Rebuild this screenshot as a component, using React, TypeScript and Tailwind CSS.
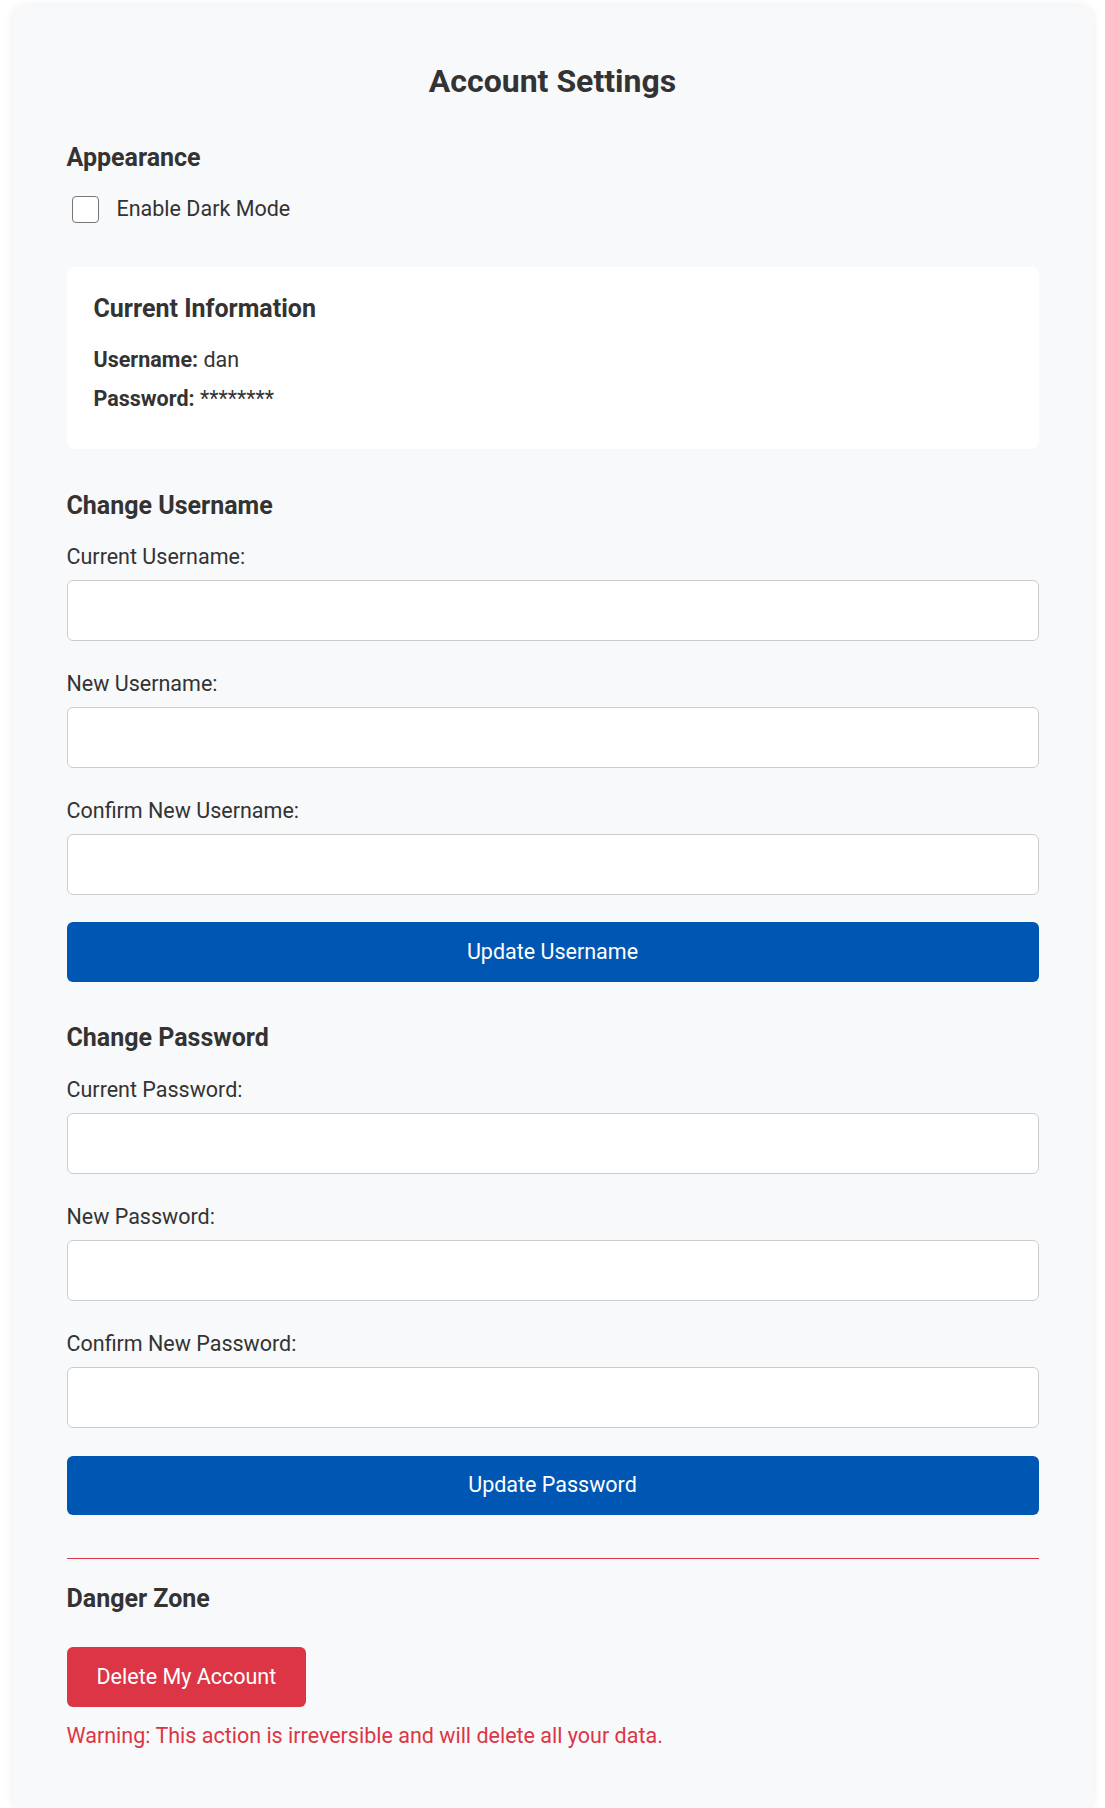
import React from "react";

function Field({ label, type = "text", mb = "mb-[28px]" }: { label: string; type?: string; mb?: string }) {
  return (
    <div className={mb}>
      <label className="block text-[21.5px] leading-[32px] text-[#333] mb-[7px]">{label}</label>
      <input
        type={type}
        className="block w-full h-[61px] bg-white border border-[#cccccc] rounded-[6px] px-3 text-[20px] outline-none"
      />
    </div>
  );
}

export default function App() {
  return (
    <div className="min-h-screen bg-white pt-[6px]" style={{ fontFamily: "Roboto, 'Noto Sans', sans-serif" }}>
      <div className="mx-auto w-[1080px] bg-[#f8f9fa] rounded-[12px] shadow-[0_0_10px_rgba(0,0,0,0.08)] px-[54px] pt-[56px] pb-[60px] text-[#333]">
        <h1 className="text-[32px] leading-[38px] font-bold text-center text-[#333]">Account Settings</h1>

        <h2 className="mt-[43px] text-[25px] leading-[30px] font-bold text-[#333]">Appearance</h2>
        <div className="mt-[20px] flex items-center h-[32px]">
          <div className="ml-[5px] w-[27px] h-[27px] rounded-[4px] border-[1.5px] border-[#767676] bg-white" />
          <span className="ml-[18px] text-[21.5px] leading-[32px] text-[#333]">Enable Dark Mode</span>
        </div>

        <div className="mt-[42px] bg-white rounded-[8px] px-[27px] pt-[27px] pb-[34px]">
          <h3 className="text-[25px] leading-[30px] font-bold text-[#333]">Current Information</h3>
          <p className="mt-[20px] text-[21.5px] leading-[32px]">
            <span className="font-bold">Username:</span> dan
          </p>
          <p className="mt-[7px] text-[21.5px] leading-[32px]">
            <span className="font-bold">Password:</span> ********
          </p>
        </div>

        <h2 className="mt-[42px] text-[25px] leading-[30px] font-bold text-[#333]">Change Username</h2>
        <div className="mt-[20px]">
          <Field label="Current Username:" mb="mb-[27px]" />
          <Field label="New Username:" mb="mb-[27px]" />
          <Field label="Confirm New Username:" mb="mb-[27px]" />
          <button className="block w-full h-[60px] bg-[#0056b3] text-white rounded-[6px] text-[21.5px]">
            Update Username
          </button>
        </div>

        <h2 className="mt-[41px] text-[25px] leading-[30px] font-bold text-[#333]">Change Password</h2>
        <div className="mt-[21px]">
          <Field label="Current Password:" type="password" mb="mb-[27px]" />
          <Field label="New Password:" type="password" mb="mb-[27px]" />
          <Field label="Confirm New Password:" type="password" mb="mb-[28px]" />
          <button className="block w-full h-[59px] bg-[#0056b3] text-white rounded-[6px] text-[21.5px]">
            Update Password
          </button>
        </div>

        <div className="mt-[43px] border-t border-[#dc3545]" />
        <h2 className="mt-[25px] text-[25px] leading-[30px] font-bold text-[#333]">Danger Zone</h2>
        <button className="mt-[33px] block h-[60px] px-[30px] bg-[#dc3545] text-white rounded-[6px] text-[21.5px]">
          Delete My Account
        </button>
        <p className="mt-[13px] text-[21.5px] leading-[32px] text-[#dc3545]">
          Warning: This action is irreversible and will delete all your data.
        </p>
      </div>
    </div>
  );
}
